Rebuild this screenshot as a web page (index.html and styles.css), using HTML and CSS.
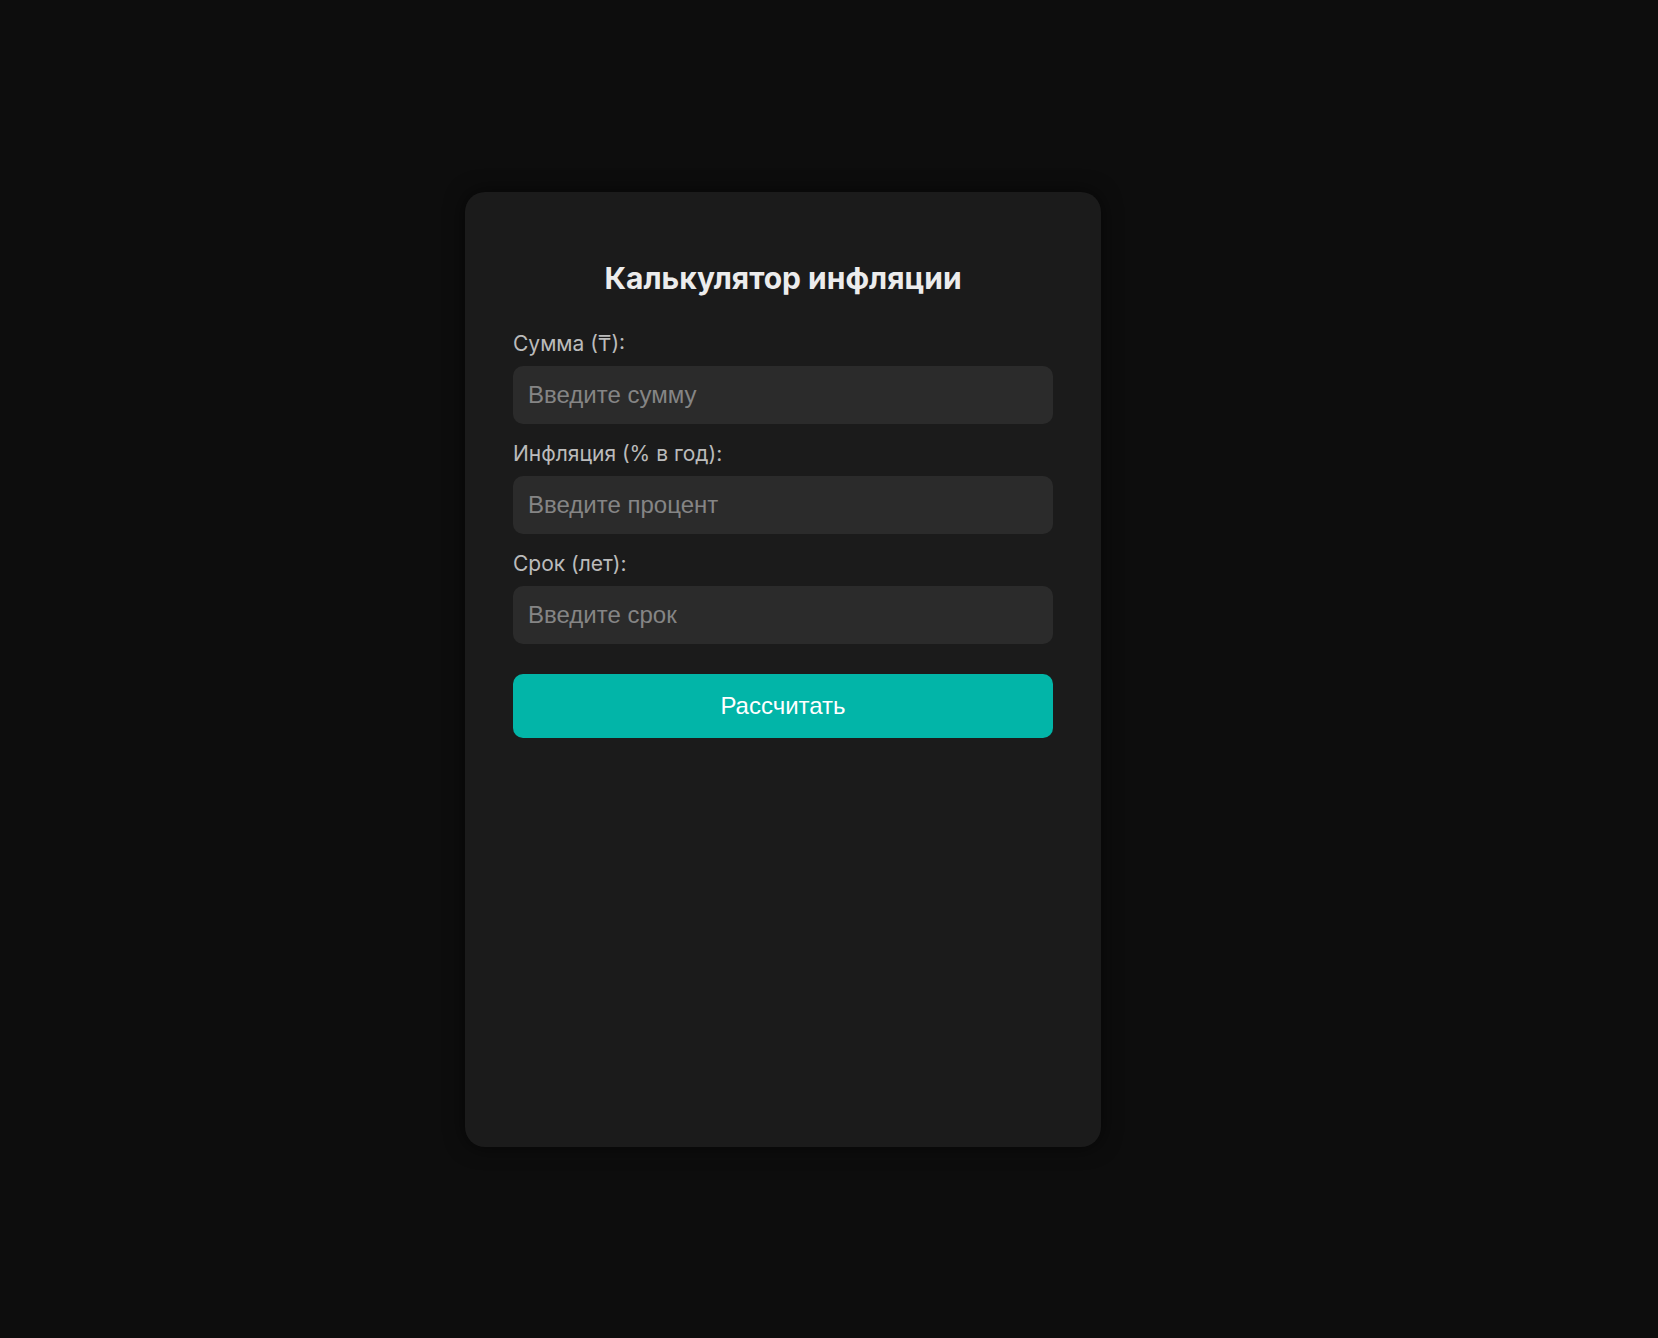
FILE: index.html
```html
<!DOCTYPE html>
<html lang="ru">
<head>
    <meta charset="UTF-8">
    <meta name="viewport" content="width=device-width, initial-scale=1.0">
    <title>Калькулятор инфляции</title>
    <link rel="stylesheet" href="styles.css">
</head>
<body>

    <div class="calc-container">
        <h1>Калькулятор инфляции</h1>

        <label for="amount">Сумма (₸):</label>
        <input type="number" id="amount" placeholder="Введите сумму">

        <label for="inflation">Инфляция (% в год):</label>
        <input type="number" id="inflation" placeholder="Введите процент">

        <label for="years">Срок (лет):</label>
        <input type="number" id="years" placeholder="Введите срок">

        <button onclick="calculate()">Рассчитать</button>

        <div class="result" id="result"></div>
    </div>

    <script>
        function calculate() {
            let amount = parseFloat(document.getElementById("amount").value);
            let rate = parseFloat(document.getElementById("inflation").value);
            let years = parseFloat(document.getElementById("years").value);
            let result = document.getElementById("result");

            if (isNaN(amount) || isNaN(rate) || isNaN(years)) {
                result.innerText = "Заполните все поля";
                return;
            }

            let future = amount / Math.pow(1 + rate / 100, years);
            result.innerText = "Реальная стоимость через " + years + " лет: " + future.toFixed(2) + " ₸";
        }
    </script>

</body>
</html>
```

FILE: styles.css
```css
* {
    margin: 0;
    padding: 0;
    box-sizing: border-box;
}

body {
    background: #0d0d0d;
    color: #eeeeee;
    font-family: "Inter", sans-serif;
    display: flex;
    justify-content: center;
    align-items: center;
    height: 100vh;
    overflow: hidden;
}

.calc-container {
    background: #1b1b1b;
    width: 636px;
    min-height: 955px;
    margin-right: 92px;
    padding: 48px;
    border-radius: 20px;
    box-shadow: 0 0 20px rgba(0, 0, 0, 0.6);
}

h1 {
    font-size: 30px;
    font-weight: bold;
    text-align: center;
    margin-top: 20px;
    margin-bottom: 36px;
    color: #ececec;
}

label {
    display: block;
    font-size: 21px;
    line-height: 24px;
    color: #bbbbbb;
    margin-bottom: 10px;
}

input {
    width: 100%;
    height: 58px;
    padding: 0 15px;
    margin-bottom: 18px;
    border: none;
    border-radius: 10px;
    background: #2b2b2b;
    color: #eeeeee;
    font-family: "Liberation Sans", Arial, sans-serif;
    font-size: 24px;
    outline: none;
}

input::placeholder {
    color: #858585;
}

input::-webkit-outer-spin-button,
input::-webkit-inner-spin-button {
    -webkit-appearance: none;
}

button {
    width: 100%;
    height: 64px;
    margin-top: 12px;
    border: none;
    border-radius: 10px;
    background: #02b5a8;
    color: white;
    font-family: "Liberation Sans", Arial, sans-serif;
    font-size: 24px;
    cursor: pointer;
    transition: 0.3s;
}

button:hover {
    background: #04c9bb;
}

.result {
    margin-top: 20px;
    font-size: 20px;
    text-align: center;
}
```
